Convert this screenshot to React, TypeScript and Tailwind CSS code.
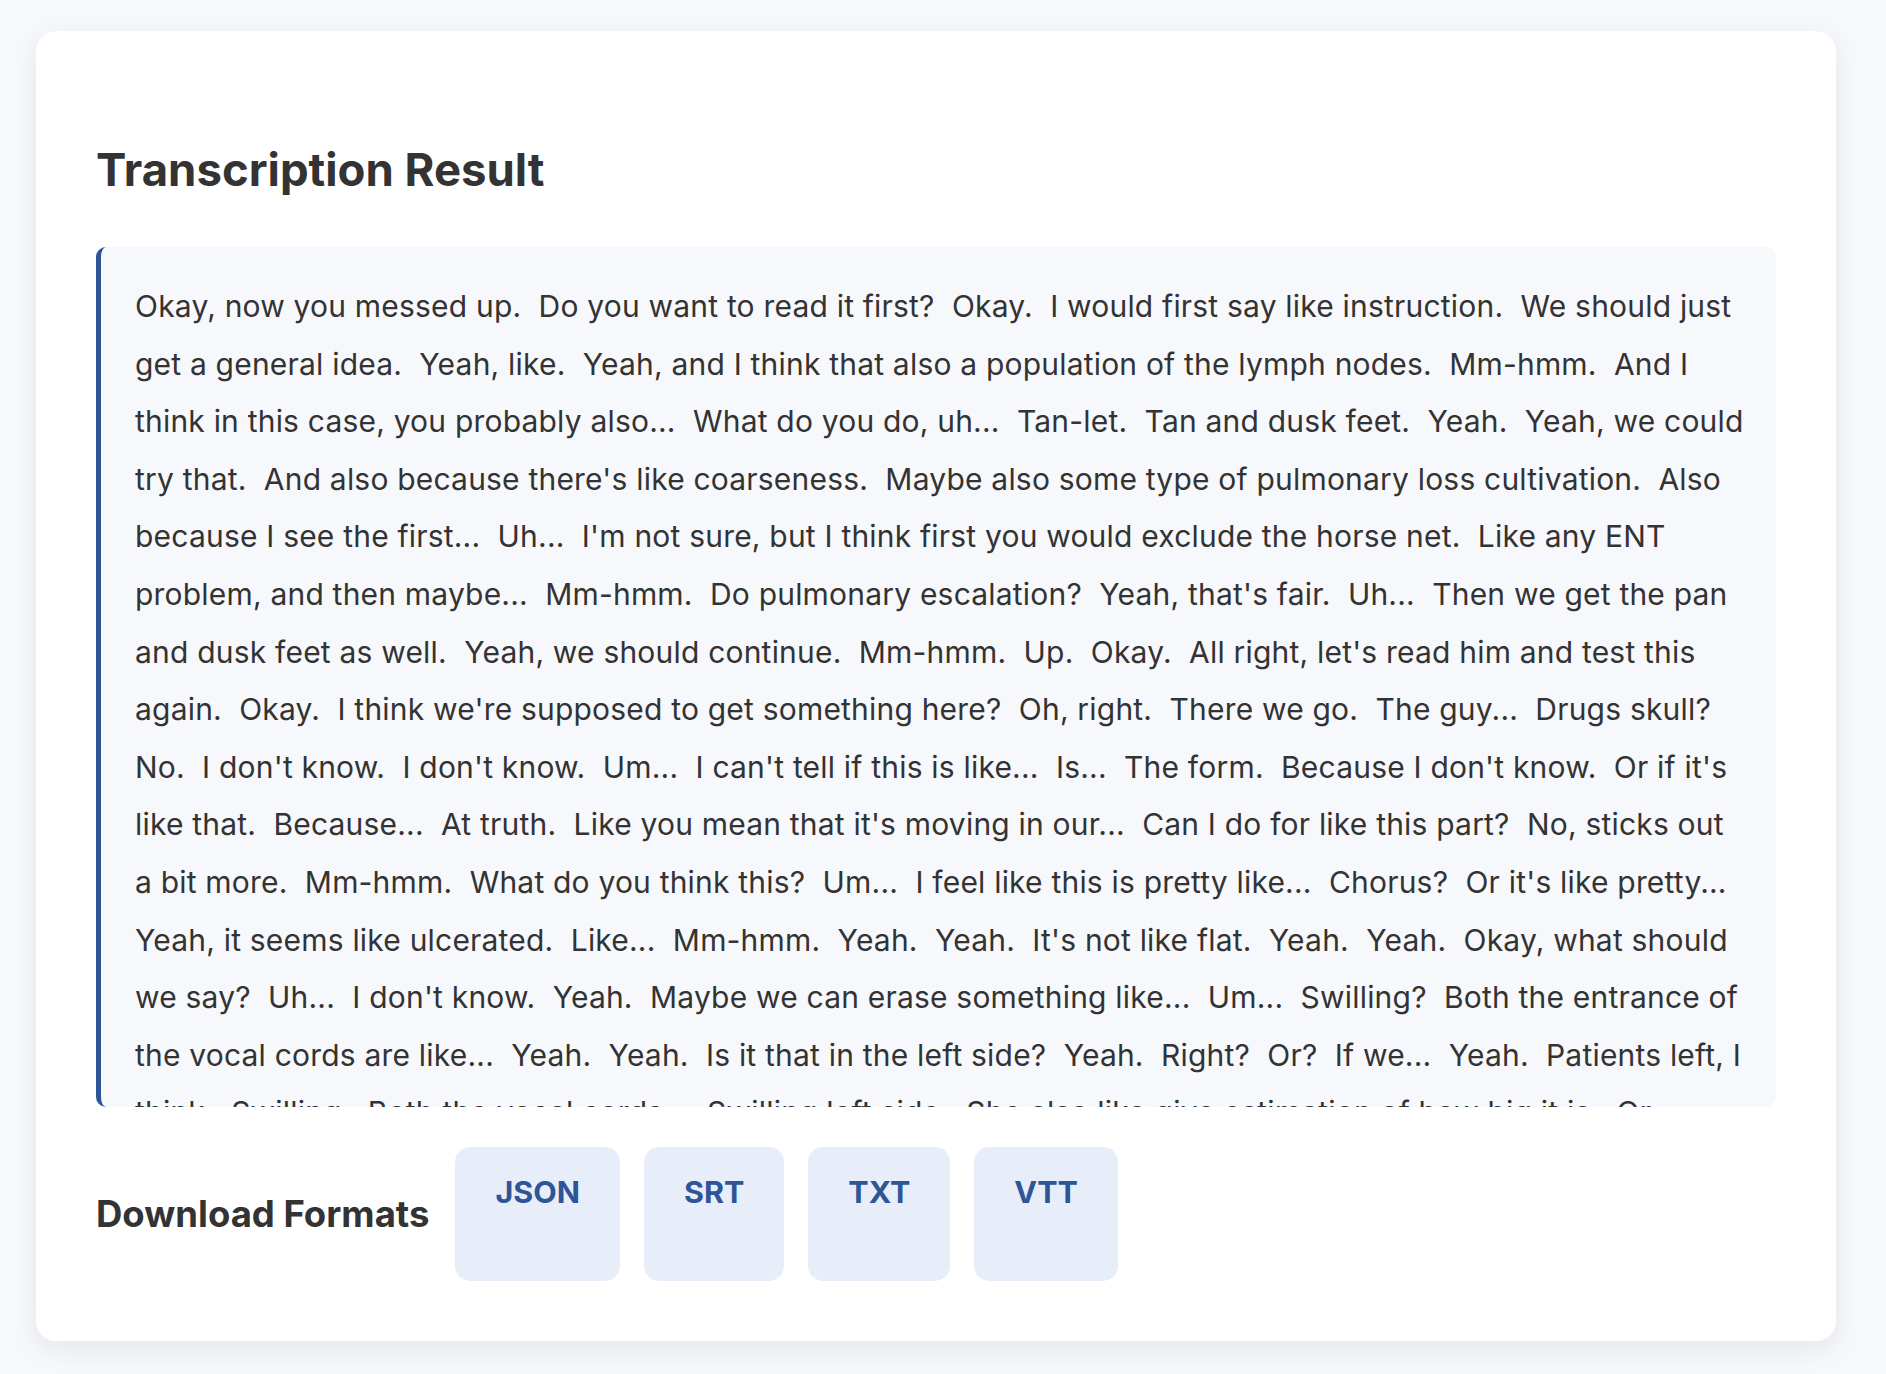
import React from 'react';

const transcriptLines = [
  'Okay, now you messed up.  Do you want to read it first?  Okay.  I would first say like instruction.  We should just',
  'get a general idea.  Yeah, like.  Yeah, and I think that also a population of the lymph nodes.  Mm-hmm.  And I',
  'think in this case, you probably also...  What do you do, uh...  Tan-let.  Tan and dusk feet.  Yeah.  Yeah, we could',
  "try that.  And also because there's like coarseness.  Maybe also some type of pulmonary loss cultivation.  Also",
  "because I see the first...  Uh...  I'm not sure, but I think first you would exclude the horse net.  Like any ENT",
  "problem, and then maybe...  Mm-hmm.  Do pulmonary escalation?  Yeah, that's fair.  Uh...  Then we get the pan",
  "and dusk feet as well.  Yeah, we should continue.  Mm-hmm.  Up.  Okay.  All right, let's read him and test this",
  "again.  Okay.  I think we're supposed to get something here?  Oh, right.  There we go.  The guy...  Drugs skull?",
  "No.  I don't know.  I don't know.  Um...  I can't tell if this is like...  Is...  The form.  Because I don't know.  Or if it's",
  "like that.  Because...  At truth.  Like you mean that it's moving in our...  Can I do for like this part?  No, sticks out",
  "a bit more.  Mm-hmm.  What do you think this?  Um...  I feel like this is pretty like...  Chorus?  Or it's like pretty...",
  "Yeah, it seems like ulcerated.  Like...  Mm-hmm.  Yeah.  Yeah.  It's not like flat.  Yeah.  Yeah.  Okay, what should",
  "we say?  Uh...  I don't know.  Yeah.  Maybe we can erase something like...  Um...  Swilling?  Both the entrance of",
  'the vocal cords are like...  Yeah.  Yeah.  Is it that in the left side?  Yeah.  Right?  Or?  If we...  Yeah.  Patients left, I',
  'think.  Swilling.  Both the vocal cords...  Swilling left side.  She also like give estimation of how big it is.  Or',
  'how much of the vocal cords it covers.  Mm-hmm.  Okay.',
];

const formats = ['JSON', 'SRT', 'TXT', 'VTT'];

const App = () => {
  return (
    <div className="min-h-screen bg-[#f7f8fb] pl-[36px] pr-[50px] pt-[31px] pb-[32px] font-['Inter','Noto_Sans',sans-serif]">
      <div className="bg-white rounded-[20px] shadow-[0_8px_28px_rgba(20,30,60,0.08)] p-[60px]">
        <h2 className="mt-[52px] mb-[50px] text-[45.5px] leading-[54px] font-bold text-[#333333]">
          Transcription Result
        </h2>

        {/* Transcript */}
        <div className="h-[860px] overflow-hidden rounded-[10px] border-l-[5px] border-[#2e5596] bg-[#f7f8fc] px-[34px] pt-[31px]">
          {transcriptLines.map((line, i) => (
            <div key={i} className="whitespace-pre text-[30px] leading-[57.6px] tracking-[0.2px] text-[#333333]">
              {line}
            </div>
          ))}
        </div>

        {/* Downloads */}
        <div className="mt-[40px] flex items-center gap-[26px]">
          <h3 className="text-[36.5px] leading-[44px] font-bold text-[#333333]">Download Formats</h3>
          <div className="flex gap-[24px]">
            {formats.map(f => (
              <button
                key={f}
                className="h-[134px] rounded-[15px] bg-[#e7eefa] px-[40px] pt-[26px] flex items-start text-[30.5px] leading-[38px] font-bold text-[#2e5596]"
              >
                {f}
              </button>
            ))}
          </div>
        </div>
      </div>
    </div>
  );
};

export default App;
